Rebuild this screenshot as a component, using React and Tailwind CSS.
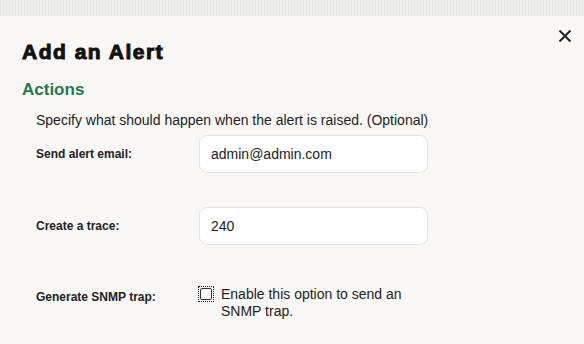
export default function App() {
  return (
    <div className="h-[344px] w-[584px] overflow-hidden bg-[#ebebea] bg-[repeating-linear-gradient(90deg,#e4e4e3_0px,#e4e4e3_1px,#efefee_1px,#efefee_3px)] pt-4 font-['Liberation_Sans',Arial,sans-serif]">
      <div className="relative h-full bg-[#f9f8f6] px-[22px] pt-[23px]">
        <button type="button" className="absolute right-[8px] top-[9px] p-1 text-[#222]">
          <svg width="14" height="14" viewBox="0 0 14 14" fill="none" stroke="currentColor" strokeWidth="2">
            <path d="M1.5 1.5l11 11M12.5 1.5l-11 11" />
          </svg>
        </button>

        <h2 className="text-[21px] font-bold leading-[25px] tracking-[1.5px] text-[#111] [-webkit-text-stroke:1px_#111]">
          Add an Alert
        </h2>
        <h3 className="mt-[16px] text-[17px] font-bold leading-[20px] text-[#1f7a4c]">Actions</h3>

        <div className="pl-[14px]">
          <p className="mt-[12px] text-[14px] leading-[17px] text-[#222]">
            Specify what should happen when the alert is raised. (Optional)
          </p>

          <div className="mt-[6px] grid grid-cols-[163px_229px] items-center gap-y-[34px]">
            <label className="text-[12px] font-bold text-[#222]">Send alert email:</label>
            <input
              readOnly
              value="admin@admin.com"
              className="h-[38px] rounded-lg border border-[#e6e4e1] bg-white px-[11px] text-[14px] text-[#222] outline-none"
            />

            <label className="text-[12px] font-bold text-[#222]">Create a trace:</label>
            <input
              readOnly
              value="240"
              className="h-[38px] rounded-lg border border-[#e6e4e1] bg-white px-[11px] text-[14px] text-[#222] outline-none"
            />

            <label className="mt-[7px] self-start pt-[2px] text-[12px] font-bold text-[#222]">Generate SNMP trap:</label>
            <div className="mt-[7px] flex items-start gap-[8px]">
              <span className="mt-[1px] flex h-[14px] w-[14px] shrink-0 items-center justify-center outline outline-1 outline-dotted outline-[#222]">
                <span className="h-[12px] w-[12px] rounded-[2px] border border-[#333] bg-white" />
              </span>
              <span className="text-[14px] leading-[17px] text-[#222]">
                Enable this option to send an SNMP trap.
              </span>
            </div>
          </div>
        </div>
      </div>
    </div>
  );
}
